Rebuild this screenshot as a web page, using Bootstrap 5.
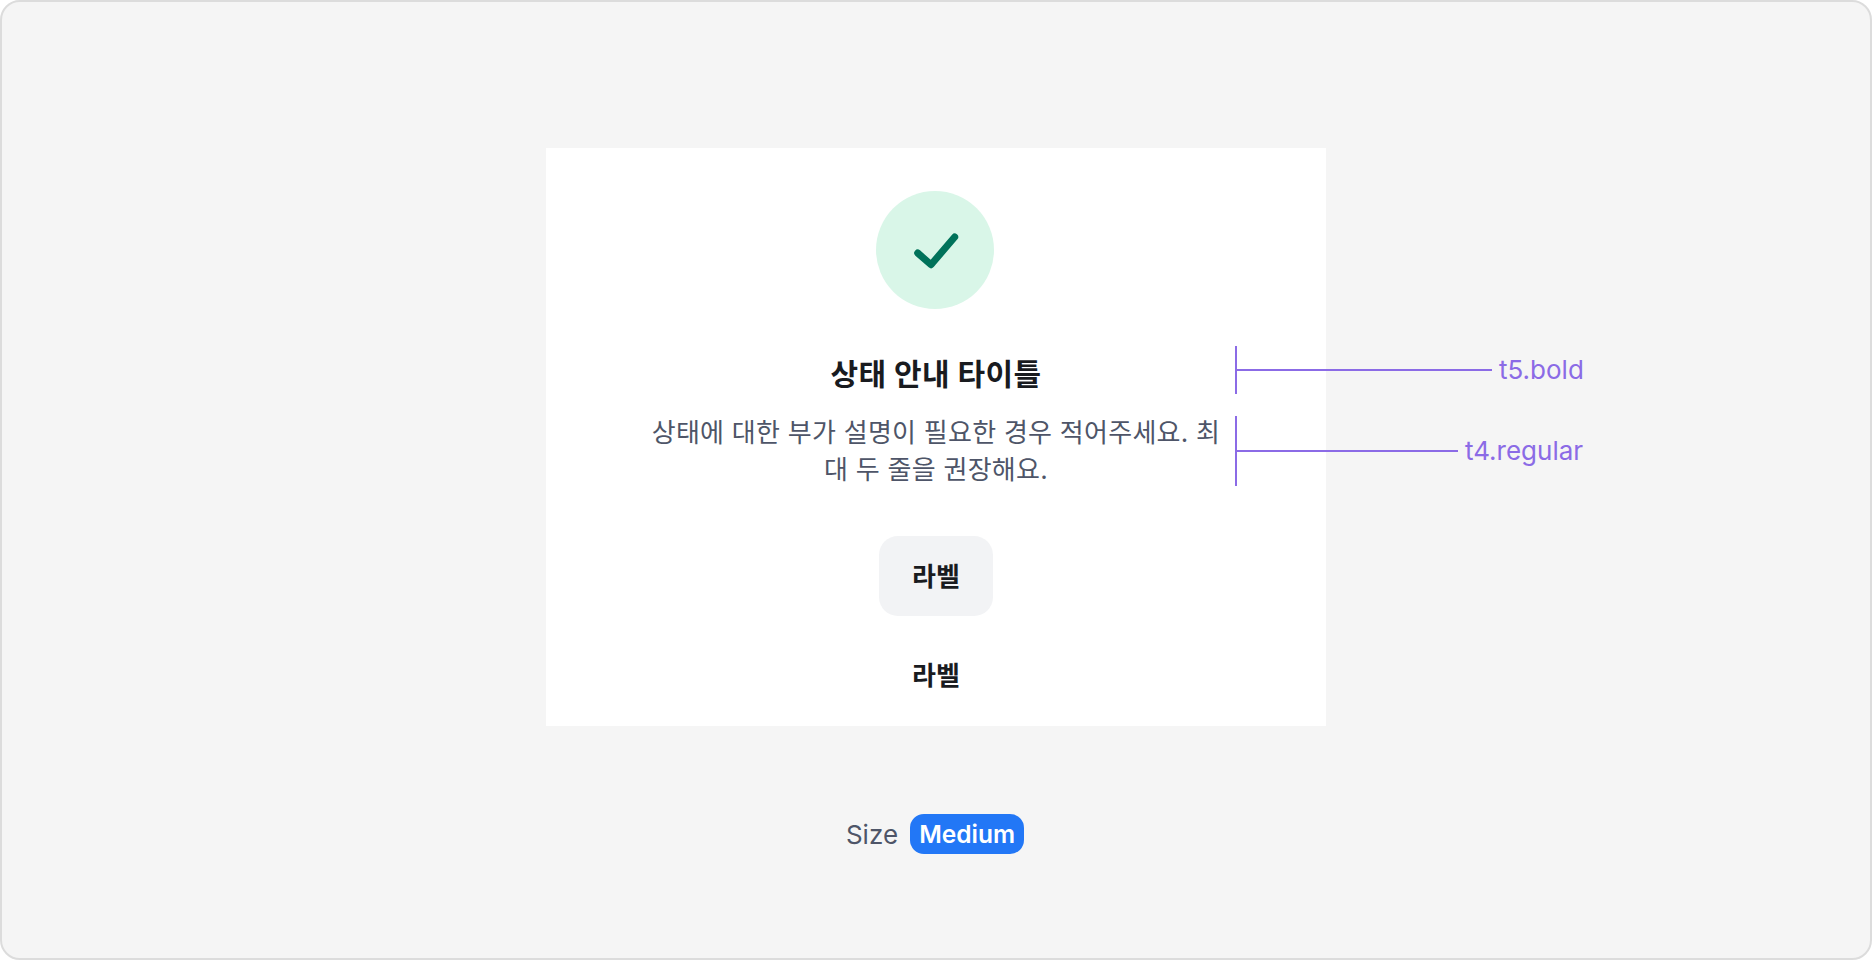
<!DOCTYPE html>
<html lang="ko">
  <head>
    <meta charset="UTF-8" />
    <title>상태 안내</title>
    <link href="https://cdn.jsdelivr.net/npm/bootstrap@5.3.0/dist/css/bootstrap.min.css" rel="stylesheet" />
    <style>
      html, body { height: 100%; overflow: hidden; }
      body { font-family: Inter, "Noto Sans CJK KR", sans-serif; background: #fff; }
      .frame { height: 960px; background: #f5f5f5; border: 2px solid #dcdcdc; border-radius: 20px; padding-top: 146px; }
      .sheet { position: relative; width: 780px; height: 578px; padding-top: 43px; background: #fff; }
      .status-icon { width: 118px; height: 118px; margin-right: 2px; }
      .status-title { margin: 44px 0 0; font-size: 30px; line-height: 42px; font-weight: 700; letter-spacing: 0.4px; color: #191b1f; }
      .status-desc { width: 576px; margin: 19px 0 0; font-size: 26px; line-height: 37px; letter-spacing: 0.26px; color: #4e5568; word-break: break-all; }
      .label-fill, .label-plain { font-size: 26px; font-weight: 700; color: #191b1f; }
      .label-fill { width: 114px; height: 80px; margin-top: 48px; background: #f2f3f5; border-radius: 19px; }
      .label-plain { height: 80px; margin-top: 19px; }
      .size-row { margin-top: 88px; margin-right: 2px; gap: 12px; font-size: 26px; color: #4e5568; }
      .size-pill { width: 114px; height: 40px; background: #2277f6; border-radius: 14px; font-size: 24.5px; font-weight: 600; color: #fff; }
      .spec { position: absolute; left: 689px; border-left: 2px solid #8b6be6; }
      .spec-line { width: 100%; height: 2px; background: #8b6be6; }
      .spec-text { position: absolute; left: 100%; margin-left: 7px; font-size: 26px; line-height: 30px; white-space: nowrap; color: #8b6be6; }
      .spec-title { top: 198px; width: 257px; height: 48px; }
      .spec-desc { top: 268px; width: 223px; height: 70px; }
    </style>
  </head>
  <body>
    <div class="frame d-flex flex-column align-items-center">
      <div class="sheet d-flex flex-column align-items-center text-center">
        <!-- check icon -->
        <svg class="status-icon" viewBox="0 0 118 118" fill="none">
          <circle cx="59" cy="59" r="59" fill="#d9f6e8" />
          <path d="M41.7 62 L55 73.7 L78.7 46" stroke="#00725a" stroke-width="7" stroke-linecap="round" stroke-linejoin="round" />
        </svg>
        <h2 class="status-title">상태 안내 타이틀</h2>
        <p class="status-desc">상태에 대한 부가 설명이 필요한 경우 적어주세요. 최대 두 줄을 권장해요.</p>
        <div class="label-fill d-flex align-items-center justify-content-center">라벨</div>
        <div class="label-plain d-flex align-items-center justify-content-center">라벨</div>

        <!-- spec annotations -->
        <div class="spec spec-title d-flex align-items-center">
          <div class="spec-line"></div>
          <span class="spec-text">t5.bold</span>
        </div>
        <div class="spec spec-desc d-flex align-items-center">
          <div class="spec-line"></div>
          <span class="spec-text">t4.regular</span>
        </div>
      </div>
      <div class="size-row d-flex align-items-center">
        <span>Size</span>
        <span class="size-pill d-flex align-items-center justify-content-center">Medium</span>
      </div>
    </div>
    <script src="https://cdn.jsdelivr.net/npm/bootstrap@5.3.0/dist/js/bootstrap.bundle.min.js"></script>
  </body>
</html>
